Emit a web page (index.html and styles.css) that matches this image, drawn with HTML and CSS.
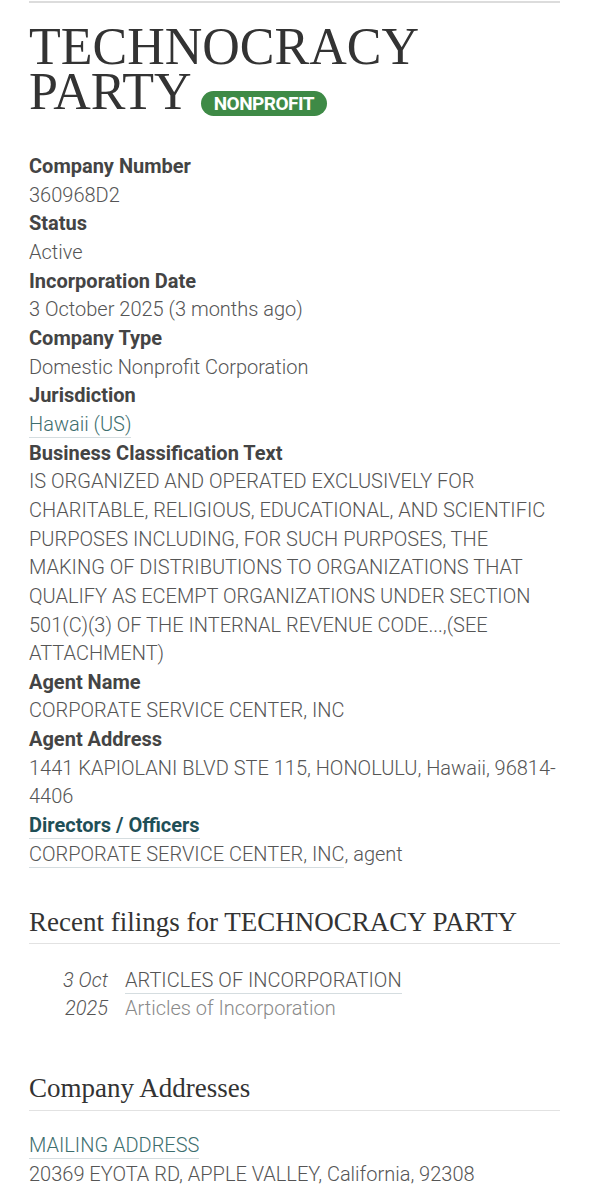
FILE: index.html
```html
<!DOCTYPE html>
<html lang="en">
<head>
    <meta charset="UTF-8">
    <meta name="viewport" content="width=device-width, initial-scale=1.0">
    <title>TECHNOCRACY PARTY</title>
    <link rel="stylesheet" href="styles.css">
</head>
<body>

    <div class="page">
        <div class="top-rule"></div>

        <h1 class="company-name"><span>TECHNOCRACY</span><br><span>PARTY</span> <span class="badge">NONPROFIT</span></h1>

        <dl class="attributes">
            <dt>Company Number</dt>
            <dd>360968D2</dd>
            <dt>Status</dt>
            <dd>Active</dd>
            <dt>Incorporation Date</dt>
            <dd>3 October 2025 (3 months ago)</dd>
            <dt>Company Type</dt>
            <dd>Domestic Nonprofit Corporation</dd>
            <dt>Jurisdiction</dt>
            <dd><a href="#" class="link teal">Hawaii (US)</a></dd>
            <dt>Business Classification Text</dt>
            <dd>IS ORGANIZED AND OPERATED EXCLUSIVELY FOR CHARITABLE, RELIGIOUS, EDUCATIONAL, AND SCIENTIFIC PURPOSES INCLUDING, FOR SUCH PURPOSES, THE MAKING OF DISTRIBUTIONS TO ORGANIZATIONS THAT QUALIFY AS ECEMPT ORGANIZATIONS UNDER SECTION 501(C)(3) OF THE INTERNAL REVENUE CODE...,(SEE ATTACHMENT)</dd>
            <dt>Agent Name</dt>
            <dd>CORPORATE SERVICE CENTER, INC</dd>
            <dt>Agent Address</dt>
            <dd>1441 KAPIOLANI BLVD STE 115, HONOLULU, Hawaii, 96814-<wbr>4406</dd>
            <dt><a href="#" class="link officers">Directors / Officers</a></dt>
            <dd><a href="#" class="link">CORPORATE SERVICE CENTER, INC</a>, agent</dd>
        </dl>

        <h2 class="section-title">Recent filings for TECHNOCRACY PARTY</h2>

        <div class="filings">
            <div class="filing-date">3 Oct<br>2025</div>
            <div class="filing-info">
                <a href="#" class="link">ARTICLES OF INCORPORATION</a><br>
                <span class="filing-desc">Articles of Incorporation</span>
            </div>
        </div>

        <h2 class="section-title addresses-title">Company Addresses</h2>

        <div class="addresses">
            <a href="#" class="link teal">MAILING ADDRESS</a><br>
            20369 EYOTA RD, APPLE VALLEY, California, 92308
        </div>
    </div>

</body>
</html>
```

FILE: styles.css
```css
body {
    margin: 0;
    background-color: #ffffff;
    font-family: Roboto, "Liberation Sans", sans-serif;
    color: #555555;
}

.page {
    padding: 0 29px;
}

.top-rule {
    border-top: 2px solid #dcdcdc; /* серая линия сверху */
    margin-top: 1px;
}

.company-name {
    font-family: "Liberation Serif", serif;
    font-weight: normal;
    font-size: 52px;
    line-height: 45px;
    color: #333333;
    margin: 21px 0 36px;
}

.badge {
    display: inline-block;
    vertical-align: -1px;
    font-family: Roboto, sans-serif;
    font-weight: bold;
    font-size: 19px;
    line-height: 25px;
    letter-spacing: -0.5px;
    color: #ffffff;
    background-color: #3e8a46;
    border-radius: 13px;
    padding: 0 13px;
    margin-left: -2px;
}

.attributes {
    margin: 0;
    font-size: 20px;
    line-height: 28.65px;
}

.attributes dt {
    font-weight: bold;
    color: #444444;
}

.attributes dd {
    margin: 0;
    font-weight: 300;
    color: #555555;
}

.link {
    color: #555555;
    text-decoration: none;
    border-bottom: 1px solid #d5dde0;
    padding-bottom: 1px;
}

.link.teal {
    color: #3d6e6e;
}

.link.officers {
    color: #1f4f57;
    font-weight: bold;
}

.section-title {
    font-family: "Liberation Serif", serif;
    font-weight: normal;
    font-size: 27px;
    line-height: 36px;
    color: #333333;
    margin: 36px 0 0;
    padding-bottom: 3px;
    border-bottom: 1px solid #e2e2e2;
}

.addresses-title {
    margin-top: 48px;
    padding-bottom: 4px;
}

.filings {
    display: flex;
    gap: 17px;
    margin: 22px 0 0;
    font-size: 20px;
    line-height: 28px;
    font-weight: 300;
}

.filing-date {
    width: 79px;
    text-align: right;
    font-style: italic;
    color: #555555;
}

.filing-desc {
    color: #8a8a8a;
}

.addresses {
    margin-top: 20px;
    font-size: 20px;
    line-height: 28.5px;
    font-weight: 300;
}
```
